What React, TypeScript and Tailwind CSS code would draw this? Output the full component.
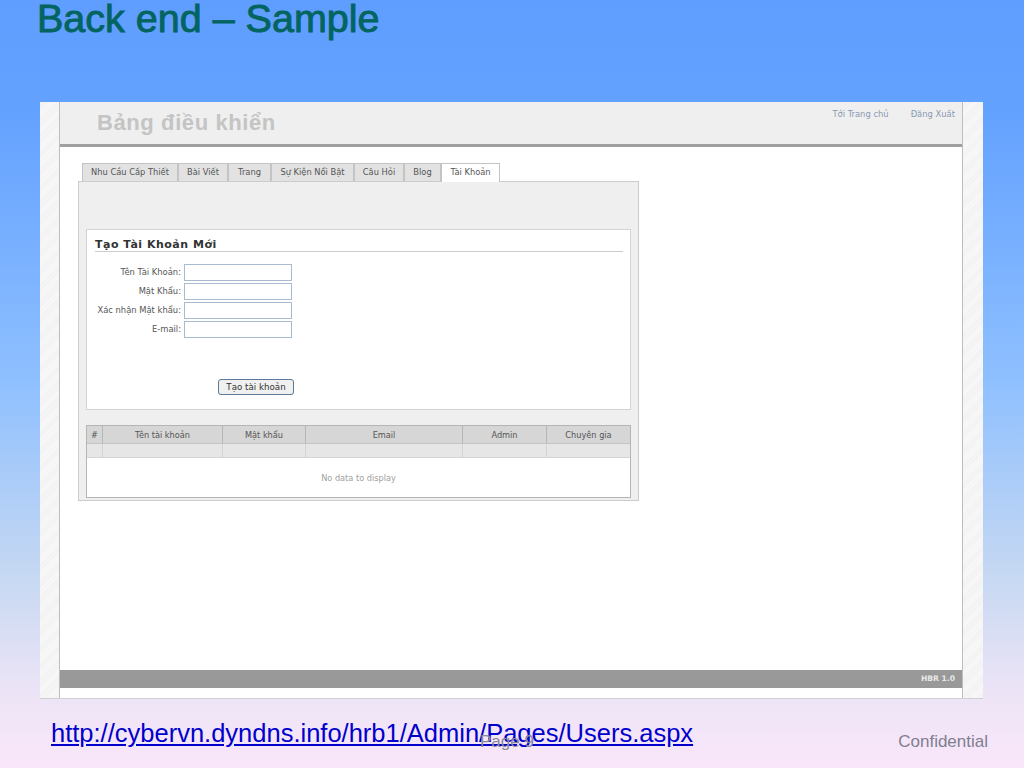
const TABS = [
  { label: 'Nhu Cầu Cấp Thiết', width: 'w-[96px]' },
  { label: 'Bài Viết', width: 'w-[50px]' },
  { label: 'Trang', width: 'w-[43px]' },
  { label: 'Sự Kiện Nổi Bật', width: 'w-[83px]' },
  { label: 'Câu Hỏi', width: 'w-[50px]' },
  { label: 'Blog', width: 'w-[37px]' },
];

const FIELDS = ['Tên Tài Khoản:', 'Mật Khẩu:', 'Xác nhận Mật khẩu:', 'E-mail:'];

const COLUMNS = ['#', 'Tên tài khoản', 'Mật khẩu', 'Email', 'Admin', 'Chuyên gia'];

const HATCH =
  'bg-[#f6f6f6] bg-[repeating-linear-gradient(135deg,#f1f1f1_0px,#f1f1f1_1px,#f9f9f9_1px,#f9f9f9_2px)]';

function Tabs() {
  return (
    <div className="ml-[22px] mt-[16px] flex h-[18px] text-[8.3px] text-[#555]">
      {TABS.map((t) => (
        <div
          key={t.label}
          className={`${t.width} flex items-center justify-center border border-b-0 border-[#c4c4c4] bg-[#e2e2e2]`}
        >
          {t.label}
        </div>
      ))}
      <div className="relative z-10 flex h-[19px] w-[59px] items-center justify-center border border-b-0 border-[#c4c4c4] bg-white pb-[2px]">
        Tài Khoản
      </div>
    </div>
  );
}

function AccountForm() {
  return (
    <div className="h-[181px] border border-[#d4d4d4] bg-white pl-[8px] pr-[8px]">
      <div className="mt-[8px] h-[14px] w-[528px] border-b border-[#ccc] text-[11px] leading-[13px] font-bold tracking-[0.5px] text-[#333]">
        Tạo Tài Khoản Mới
      </div>
      <div className="mt-[12px] flex flex-col gap-[2px]">
        {FIELDS.map((f) => (
          <div key={f} className="flex h-[17px] items-center">
            <div className="w-[86px] text-right text-[8.4px] whitespace-nowrap text-[#555]">{f}</div>
            <div className="ml-[3px] h-[17px] w-[108px] border border-[#a9bccf] bg-white" />
          </div>
        ))}
      </div>
      <div className="ml-[123px] mt-[41px] flex h-[16px] w-[76px] items-center justify-center rounded-[3px] border border-[#5b7a99] bg-[#f0f0f0] pt-[1px] text-[8.7px] text-[#333]">
        Tạo tài khoản
      </div>
    </div>
  );
}

function UsersTable() {
  return (
    <div className="mt-[15px] h-[73px] border border-[#b5b5b5] bg-white">
      <div className="grid h-[18px] grid-cols-[16px_120px_83px_157px_84px_1fr] border-b border-[#c4c4c4] bg-[#d6d6d6] text-[8.2px] text-[#555]">
        {COLUMNS.map((c) => (
          <div key={c} className="flex items-center justify-center border-r border-[#b5b5b5] pt-[1px] last:border-r-0">
            {c}
          </div>
        ))}
      </div>
      <div className="grid h-[14px] grid-cols-[16px_120px_83px_157px_84px_1fr] border-b border-[#d4d4d4] bg-[#e6e6e6]">
        {COLUMNS.map((c) => (
          <div key={c} className="border-r border-[#d4d4d4] last:border-r-0" />
        ))}
      </div>
      <div className="flex h-[39px] items-center justify-center pt-[1px] text-[8.2px] text-[#a0a0a0]">No data to display</div>
    </div>
  );
}

function AdminShot() {
  return (
    <div className="mx-[40px] flex h-[597px] w-[943px] border-b border-[#d0d0d0] bg-white font-['DejaVu_Sans',sans-serif]">
      <div className={`w-[19px] ${HATCH}`} />
      <div className="flex w-[904px] flex-col border-x border-[#bdbdbd]">
        <div className="flex h-[42px] justify-between bg-[#efefef] pl-[37px] pr-[7px]">
          <div className="mt-[7px] font-['Liberation_Sans',sans-serif] text-[22px] leading-[28px] font-bold tracking-[0.6px] text-[#c4c4c4]">
            Bảng điều khiển
          </div>
          <div className="mt-[6px] flex gap-[22px] text-[8.4px] leading-[12px] text-[#8a9ab2]">
            <span>Tới Trang chủ</span>
            <span>Đăng Xuất</span>
          </div>
        </div>
        <div className="h-[3px] bg-[#a0a0a0]" />
        <Tabs />
        <div className="ml-[18px] h-[320px] w-[561px] border border-[#ccc] bg-[#efefef] px-[7px] pt-[47px]">
          <AccountForm />
          <UsersTable />
        </div>
        <div className="mt-[169px] flex h-[18px] items-center justify-end bg-[#999] pr-[7px] text-[7.6px] font-bold text-[#e8e8e8]">
          HBR 1.0
        </div>
      </div>
      <div className={`w-[20px] ${HATCH}`} />
    </div>
  );
}

export default function App() {
  return (
    <div className="relative h-[768px] w-[1024px] overflow-hidden bg-[linear-gradient(180deg,#5f9dff_0%,#64a2ff_15%,#8fc0ff_50%,#c6d8f2_75%,#ece4f6_90%,#fae6fa_100%)] font-['Liberation_Sans',sans-serif]">
      <div className="h-[102px] pl-[37px] text-[39.5px] leading-[36px] text-[#046460] [-webkit-text-stroke:0.9px_#046460]">
        Back end – Sample
      </div>
      <AdminShot />
      <a className="mt-[19px] ml-[51px] block w-fit text-[25.5px] leading-[30px] text-[#0000cc] underline">
        http://cybervn.dyndns.info/hrb1/Admin/Pages/Users.aspx
      </a>
      <div className="absolute left-[480px] top-[729px] text-[17px] text-[#8a8a9a]">Page 9</div>
      <div className="absolute right-[36px] top-[729px] text-[17px] text-[#807f90]">Confidential</div>
    </div>
  );
}
